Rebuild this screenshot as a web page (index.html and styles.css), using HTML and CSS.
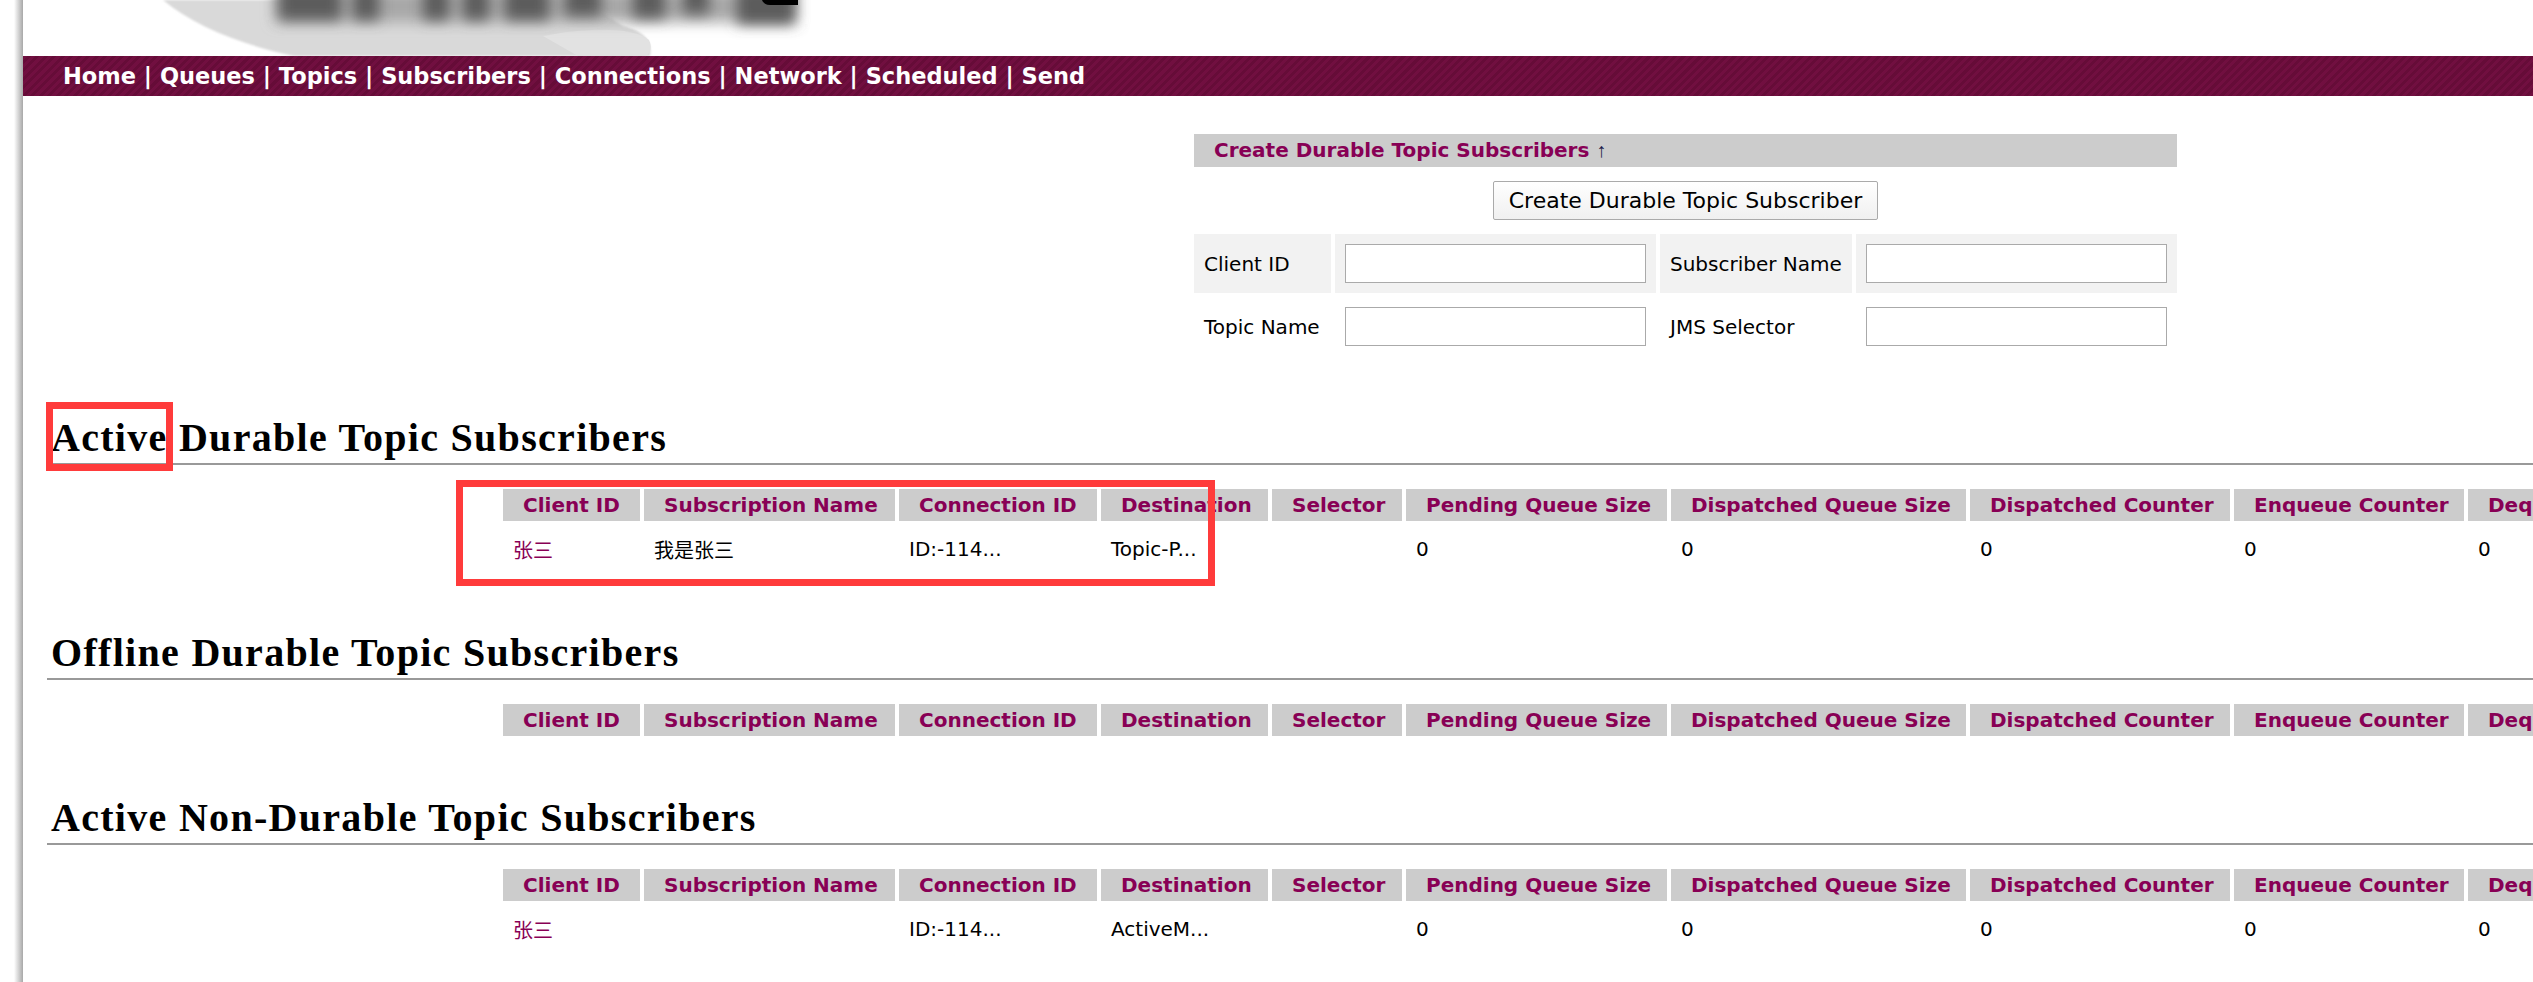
FILE: index.html
```html
<!DOCTYPE html>
<html lang="en">
<head>
<meta charset="utf-8">
<title>ActiveMQ Subscribers</title>
<link rel="stylesheet" href="styles.css">
</head>
<body>
<div class="page">
  <header class="logo">
    <svg class="logo-art" width="830" height="56" viewBox="0 0 830 56" aria-hidden="true">
      <defs>
        <filter id="soft" x="-20%" y="-80%" width="140%" height="260%"><feGaussianBlur stdDeviation="7"></feGaussianBlur></filter>
        <filter id="softer" x="-10%" y="-30%" width="120%" height="160%"><feGaussianBlur stdDeviation="1.2"></feGaussianBlur></filter>
      </defs>
      <path d="M140 0 C170 25 215 44 271 56 L627 56 C629 44 625 32 600 26 L560 0 Z" fill="#d9d9d9" filter="url(#softer)"></path>
      <path d="M520 36 C560 28 610 26 626 40 C630 48 627 56 620 56 L555 56 Z" fill="#e2e2e2"></path>
      <rect x="252" y="-10" width="520" height="32" fill="#a8a8a8" filter="url(#soft)"></rect>
      <g fill="#5c5c5c" filter="url(#soft)">
        <rect x="256" y="-14" width="62" height="34"></rect>
        <rect x="330" y="-14" width="26" height="34"></rect>
        <rect x="400" y="-14" width="26" height="34"></rect>
        <rect x="440" y="-14" width="26" height="34"></rect>
        <rect x="482" y="-14" width="44" height="34"></rect>
        <rect x="542" y="-14" width="36" height="30"></rect>
        <rect x="610" y="-14" width="32" height="32"></rect>
        <rect x="660" y="-14" width="26" height="28"></rect>
        <rect x="714" y="-14" width="58" height="38"></rect>
      </g>
      <path d="M739 0 H775 V5 H747 Q741 5 739 0 Z" fill="#000"></path>
    </svg>
  </header>

  <nav class="menu">
    <a href="#">Home</a> | <a href="#">Queues</a> | <a href="#">Topics</a> | <a href="#">Subscribers</a> | <a href="#">Connections</a> | <a href="#">Network</a> | <a href="#">Scheduled</a> | <a href="#">Send</a>
  </nav>

  <main class="content">
    <form class="create">
      <div class="create-title"><a href="#">Create Durable Topic Subscribers</a> <span class="arrow">↑</span></div>
      <div class="create-action"><button type="button" class="btn">Create Durable Topic Subscriber</button></div>
      <div class="create-grid">
        <div class="cell shade">Client ID</div>
        <div class="cell shade field"><input class="input" type="text"></div>
        <div class="cell shade">Subscriber Name</div>
        <div class="cell shade field"><input class="input" type="text"></div>
        <div class="cell">Topic Name</div>
        <div class="cell field"><input class="input" type="text"></div>
        <div class="cell">JMS Selector</div>
        <div class="cell field"><input class="input" type="text"></div>
      </div>
    </form>

    <h2 class="title first">Active Durable Topic Subscribers</h2>
    <table class="subs">
      <colgroup><col class="c1"><col class="c2"><col class="c3"><col class="c4"><col class="c5"><col class="c6"><col class="c7"><col class="c8"><col class="c9"><col class="c10"></colgroup>
      <thead><tr><th>Client ID</th><th>Subscription Name</th><th>Connection ID</th><th>Destination</th><th>Selector</th><th>Pending Queue Size</th><th>Dispatched Queue Size</th><th>Dispatched Counter</th><th>Enqueue Counter</th><th>Dequeue Counter</th></tr></thead>
      <tbody><tr><td><a href="#">张三</a></td><td>我是张三</td><td>ID:-114...</td><td>Topic-P...</td><td></td><td>0</td><td>0</td><td>0</td><td>0</td><td>0</td></tr></tbody>
    </table>

    <h2 class="title">Offline Durable Topic Subscribers</h2>
    <table class="subs">
      <colgroup><col class="c1"><col class="c2"><col class="c3"><col class="c4"><col class="c5"><col class="c6"><col class="c7"><col class="c8"><col class="c9"><col class="c10"></colgroup>
      <thead><tr><th>Client ID</th><th>Subscription Name</th><th>Connection ID</th><th>Destination</th><th>Selector</th><th>Pending Queue Size</th><th>Dispatched Queue Size</th><th>Dispatched Counter</th><th>Enqueue Counter</th><th>Dequeue Counter</th></tr></thead>
      <tbody></tbody>
    </table>

    <h2 class="title">Active Non-Durable Topic Subscribers</h2>
    <table class="subs">
      <colgroup><col class="c1"><col class="c2"><col class="c3"><col class="c4"><col class="c5"><col class="c6"><col class="c7"><col class="c8"><col class="c9"><col class="c10"></colgroup>
      <thead><tr><th>Client ID</th><th>Subscription Name</th><th>Connection ID</th><th>Destination</th><th>Selector</th><th>Pending Queue Size</th><th>Dispatched Queue Size</th><th>Dispatched Counter</th><th>Enqueue Counter</th><th>Dequeue Counter</th></tr></thead>
      <tbody><tr><td><a href="#">张三</a></td><td></td><td>ID:-114...</td><td>ActiveM...</td><td></td><td>0</td><td>0</td><td>0</td><td>0</td><td>0</td></tr></tbody>
    </table>
  </main>
</div>
<div class="mark mark-word"></div>
<div class="mark mark-table"></div>
</body>
</html>
```
FILE: styles.css
```css
html, body {
  margin: 0;
  padding: 0;
  height: 100%;
  overflow: hidden;
  background: #fff;
}
body {
  position: relative;
  width: 2533px;
  height: 982px;
  font-family: "DejaVu Sans", Verdana, "Noto Sans CJK SC", sans-serif;
  font-size: 20px;
  color: #000;
}
a { color: #880055; text-decoration: none; }

.page {
  margin-left: 14px;
  padding-left: 9px;
  height: 982px;
  overflow: hidden;
  background: linear-gradient(90deg, #fff 0, #a8a8a8 9px, #fff 9px);
}

.logo { height: 56px; overflow: hidden; background: #fff; }
.logo-art { display: block; }

.menu {
  height: 40px;
  line-height: 40px;
  padding-left: 40px;
  color: #fff;
  font-weight: 700;
  font-size: 22.5px;
  white-space: nowrap;
  background: repeating-linear-gradient(135deg, #710f40 0, #710f40 3px, #660c38 3px, #660c38 6px);
}
.menu a { color: #fff; }

.content { background: #fff; }

.create { width: 983px; margin-left: 1171px; padding-top: 38px; }
.create-title {
  height: 33px;
  line-height: 33px;
  padding-left: 20px;
  background: #ccc;
  font-weight: 700;
  font-size: 20px;
}
.arrow { font-family: "Liberation Sans", sans-serif; font-weight: 400; color: #1a1a4a; }
.create-action { display: flex; justify-content: center; padding: 14px 0; }
.btn {
  width: 385px;
  height: 39px;
  padding: 0;
  font: inherit;
  font-size: 22px;
  color: #000;
  background: linear-gradient(#fff, #f0f0f0);
  border: 1px solid #aaa;
  border-radius: 2px;
}
.create-grid {
  display: grid;
  grid-template-columns: 137px 321px 192px 321px;
  grid-auto-rows: 59px;
  column-gap: 4px;
  row-gap: 4px;
}
.cell {
  display: flex;
  align-items: center;
  padding-left: 10px;
  white-space: nowrap;
}
.shade { background: #f2f2f2; }
.field { padding: 0 10px; }
.input {
  width: 100%;
  height: 39px;
  box-sizing: border-box;
  border: 1px solid #aaa;
  background: #fff;
}

.title {
  margin: 53px 0 0 24px;
  height: 50px;
  padding-left: 4px;
  border-bottom: 2px solid #999;
  font-family: "Liberation Serif", Georgia, serif;
  font-size: 40px;
  font-weight: 700;
  letter-spacing: 1.3px;
  line-height: 50px;
  color: #000;
  white-space: nowrap;
}
.title.first { margin-top: 57px; }

.subs {
  table-layout: fixed;
  width: 2213px;
  margin: 20px 0 0 476px;
  border-collapse: separate;
  border-spacing: 4px;
}
.c1 { width: 137px; }
.c2 { width: 251px; }
.c3 { width: 198px; }
.c4 { width: 167px; }
.c5 { width: 130px; }
.c6 { width: 261px; }
.c7 { width: 295px; }
.c8 { width: 260px; }
.c9 { width: 230px; }
.c10 { width: 240px; }
.subs th {
  height: 32px;
  padding: 0 0 0 20px;
  background: #ccc;
  color: #880055;
  font-weight: 700;
  font-size: 20px;
  text-align: left;
  white-space: nowrap;
  overflow: hidden;
}
.subs td {
  height: 44px;
  padding: 2px 0 0 10px;
  white-space: nowrap;
}

.mark { position: absolute; box-sizing: border-box; border: 7px solid #ff3b3b; }
.mark-word { left: 46px; top: 402px; width: 127px; height: 69px; }
.mark-table { left: 456px; top: 480px; width: 759px; height: 106px; }
```
